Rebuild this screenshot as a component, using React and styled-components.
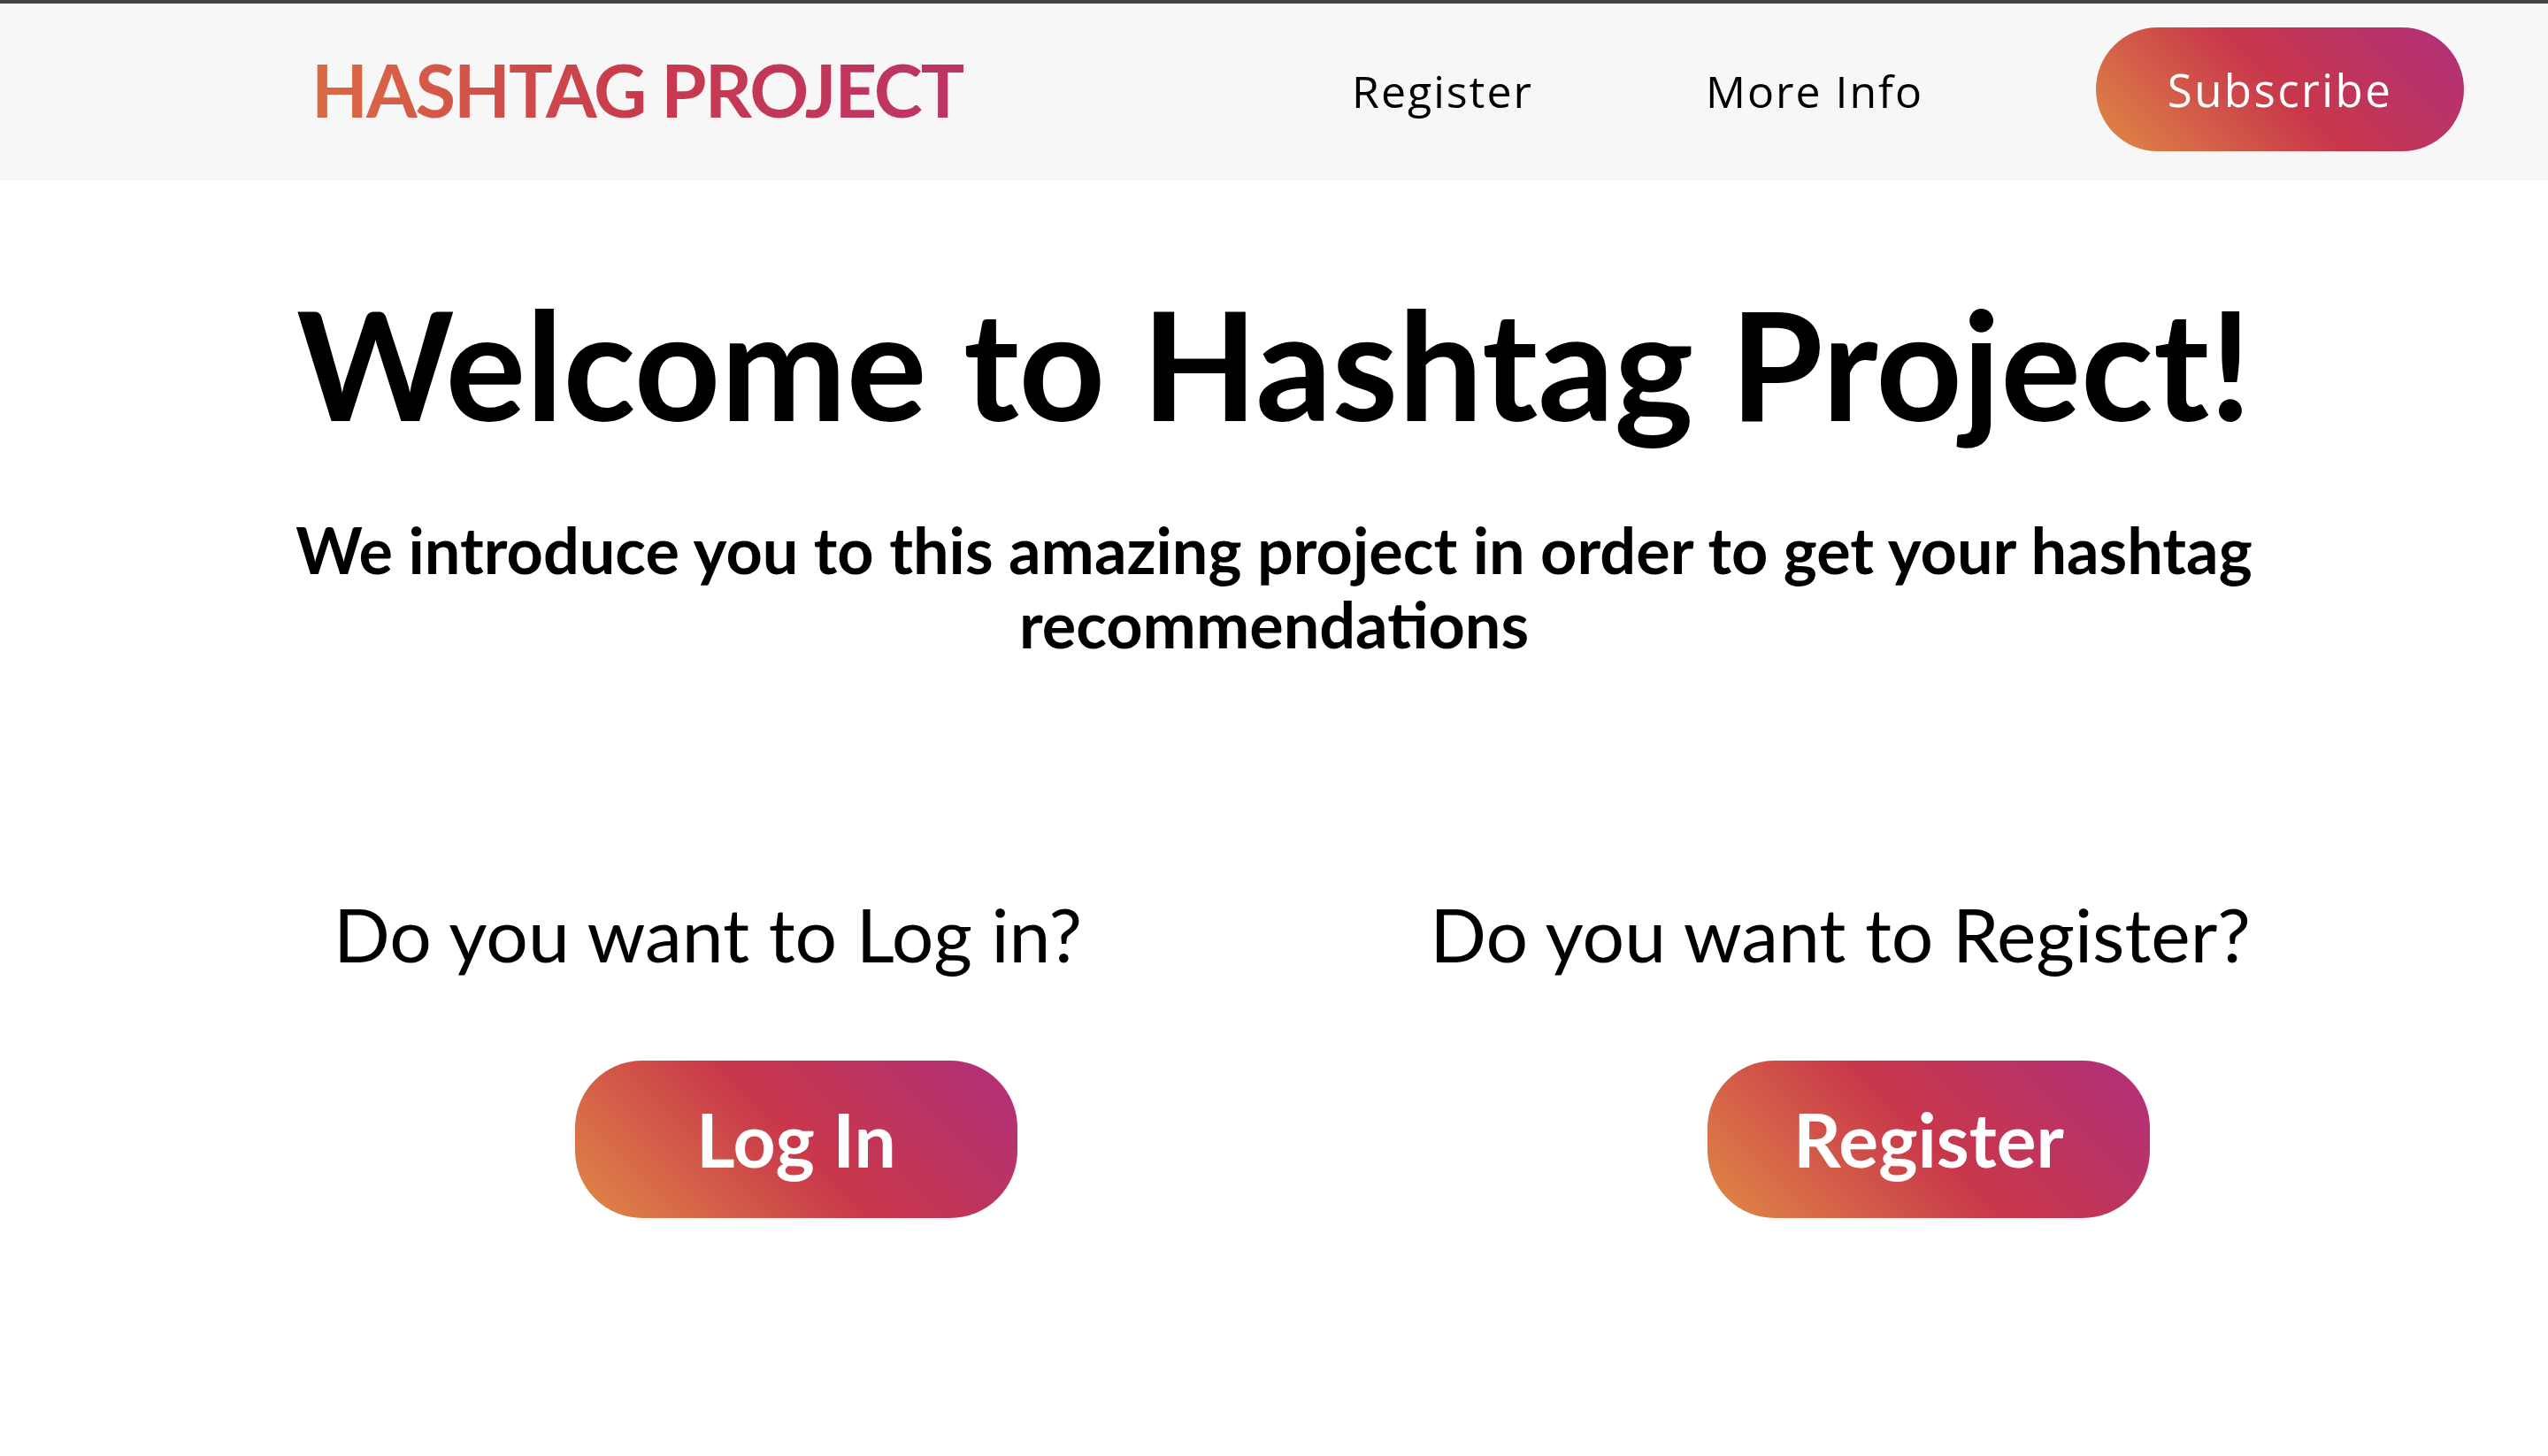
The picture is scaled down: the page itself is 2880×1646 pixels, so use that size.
import React from "react";
import styled, { createGlobalStyle } from "styled-components";

const GlobalStyle = createGlobalStyle`
  * {
    box-sizing: border-box;
  }

  body {
    margin: 0;
    background: #ffffff;
    color: #000000;
    font-family: Lato, "Noto Sans", sans-serif;
  }
`;

const brandGradient = "linear-gradient(45deg, #e08a46 0%, #c8374a 50%, #b0307c 100%)";

const App = () => {
  return (
    <>
      <GlobalStyle />
      <Header>
        <Logo>HASHTAG PROJECT</Logo>
        <Nav>
          <NavLink href="#">Register</NavLink>
          <NavLink href="#">More Info</NavLink>
          <Subscribe>Subscribe</Subscribe>
        </Nav>
      </Header>
      <Main>
        <Title>Welcome to Hashtag Project!</Title>
        <Intro>
          We introduce you to this amazing project in order to get your hashtag
          <br />
          recommendations
        </Intro>
        <Choices>
          <Choice>
            <Question>Do you want to Log in?</Question>
            <ActionButton>Log In</ActionButton>
          </Choice>
          <Choice>
            <Question>Do you want to Register?</Question>
            <ActionButton>Register</ActionButton>
          </Choice>
        </Choices>
      </Main>
    </>
  );
};

export default App;

const Header = styled.header`
  display: flex;
  align-items: center;
  justify-content: space-between;
  height: 204px;
  padding: 0 95px 6px 352px;
  border-top: 4px solid #444446;
  background: #f7f7f7;
`;

const Logo = styled.h1`
  margin: 0;
  font-family: Lato, sans-serif;
  font-size: 83px;
  font-weight: 700;
  letter-spacing: -2px;
  background: linear-gradient(90deg, #dc6a45, #c83a4c 50%, #bb3466);
  -webkit-background-clip: text;
  background-clip: text;
  color: transparent;
`;

const Nav = styled.nav`
  display: flex;
  align-items: center;
  gap: 195px;
`;

const NavLink = styled.a`
  font-family: "Open Sans", sans-serif;
  font-size: 50px;
  font-weight: 400;
  letter-spacing: 2px;
  color: #000000;
  text-decoration: none;
  transform: translateY(2px);
`;

const Subscribe = styled.button`
  width: 416px;
  height: 140px;
  border: none;
  border-radius: 70px;
  background: ${brandGradient};
  color: #ffffff;
  font-family: "Open Sans", sans-serif;
  font-size: 51px;
  letter-spacing: 2.4px;
  cursor: pointer;
`;

const Main = styled.main`
  display: flex;
  flex-direction: column;
  align-items: center;
  padding-top: 104px;
`;

const Title = styled.h2`
  margin: 0;
  font-size: 170px;
  font-weight: 700;
  line-height: 1.2;
`;

const Intro = styled.p`
  margin: 67px 0 0;
  font-size: 72px;
  font-weight: 700;
  line-height: 84px;
  text-align: center;
`;

const Choices = styled.section`
  display: grid;
  grid-template-columns: 1fr 1fr;
  width: 100%;
  padding: 0 160px;
  margin-top: 259px;
`;

const Choice = styled.div`
  display: flex;
  flex-direction: column;
  align-items: center;
`;

const Question = styled.p`
  margin: 0;
  font-size: 84px;
  font-weight: 400;
  line-height: 1.2;
`;

const ActionButton = styled.button`
  width: 500px;
  height: 178px;
  margin: 92px 0 0 200px;
  border: none;
  border-radius: 76px;
  background: ${brandGradient};
  color: #ffffff;
  font-family: Lato, sans-serif;
  font-size: 84px;
  font-weight: 700;
  cursor: pointer;
`;
